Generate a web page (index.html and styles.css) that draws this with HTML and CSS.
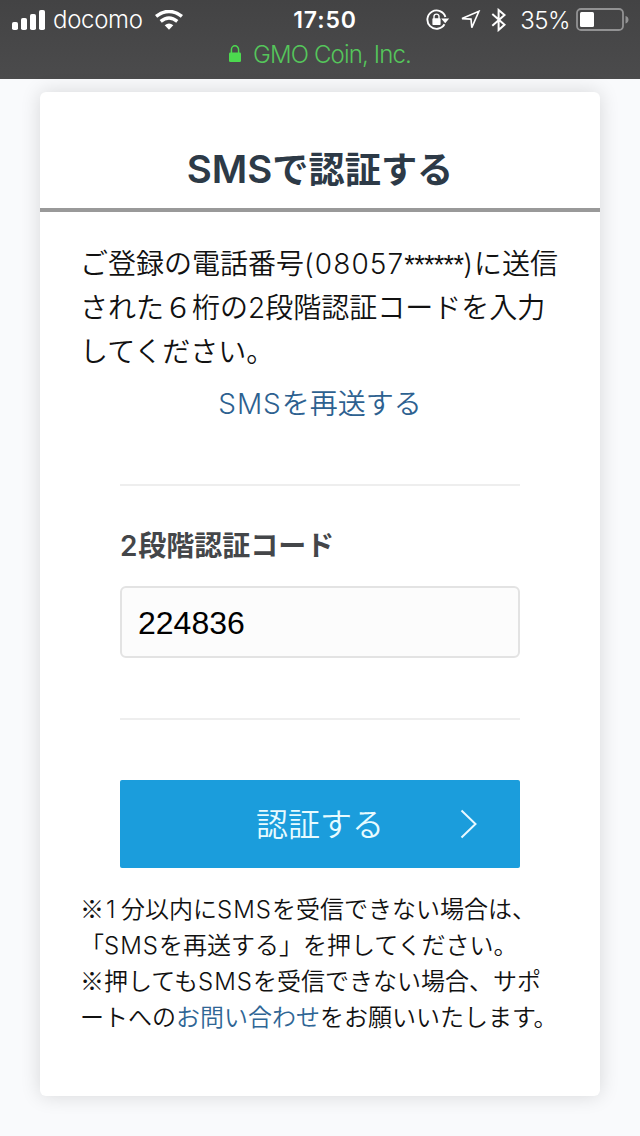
FILE: index.html
```html
<!DOCTYPE html>
<html lang="ja">
<head>
<meta charset="utf-8">
<title>SMSで認証する</title>
<link rel="stylesheet" href="styles.css">
</head>
<body>
<header class="browser-bar">
  <div class="status">
    <div class="carrier">
      <svg class="signal" width="34" height="21" viewBox="0 0 34 21" fill="#fff"><rect x="0" y="12" width="6" height="8" rx="1.8"/><rect x="9" y="8" width="6" height="12" rx="1.8"/><rect x="18" y="4" width="6" height="16" rx="1.8"/><rect x="27" y="0" width="6" height="20" rx="1.8"/></svg>
      <span class="carrier-name">docomo</span>
      <svg class="wifi" width="28" height="20" viewBox="0 0 28 20"><path d="M1.1 6.4Q14-3.4 26.9 6.4" fill="none" stroke="#fff" stroke-width="3.6"/><path d="M5.7 11.4Q14 4.6 22.3 11.4" fill="none" stroke="#fff" stroke-width="3.4"/><path d="M9.7 15.3Q14 11.6 18.3 15.3L14 19.8Z" fill="#fff"/></svg>
    </div>
    <span class="clock">17:50</span>
    <div class="indicators">
      <svg class="rotation" width="24" height="22" viewBox="0 0 24 22"><path d="M19.4 8A9.2 9.2 0 1 0 18.5 15.3" fill="none" stroke="#fff" stroke-width="1.9"/><path d="M15.2 9.5h8l-4 4.8Z" fill="#fff"/><rect x="6.4" y="9.3" width="8.2" height="6.7" rx=".8" fill="#fff"/><path d="M8 10V7.6a2.5 2.5 0 0 1 5 0V10" fill="none" stroke="#fff" stroke-width="1.4"/></svg>
      <svg class="location" width="21" height="20" viewBox="0 0 21 20"><path d="M2 8.6 18.9 1.3 11.8 17.6 11 9.1Z" fill="none" stroke="#fff" stroke-width="1.6"/></svg>
      <svg class="bluetooth" width="16" height="24" viewBox="0 0 16 24"><path d="M1.3 6.1 13.5 16.8 7.6 22V2L13.5 7 1.3 17.8" fill="none" stroke="#fff" stroke-width="2"/></svg>
      <span class="percent">35%</span>
      <svg class="battery" width="54" height="24" viewBox="0 0 54 24"><rect x="1" y="1" width="46" height="21" rx="4" fill="none" stroke="#929293" stroke-width="1.8"/><rect x="4" y="4" width="14" height="15" rx="1.5" fill="#fff"/><path d="M49.5 8q3 .8 3 3.7t-3 3.7Z" fill="#929293"/></svg>
    </div>
  </div>
  <div class="site">
    <svg class="lock" width="12" height="18" viewBox="0 0 12 18"><rect x="0" y="7.5" width="12" height="9.6" rx="1.3" fill="#4cd94f"/><path d="M2.4 8V4.8a3.6 4 0 0 1 7.2 0V8" fill="none" stroke="#4cd94f" stroke-width="1.5"/></svg>
    <span class="site-name">GMO Coin, Inc.</span>
  </div>
</header>
<main class="card">
  <h1 class="title"><span class="title-latin">SMS</span>で認証する</h1>
  <p class="lead">ご登録の電話番号<span class="phone">(08057<span class="stars">******</span>)</span>に送信<br>された６桁の2段階認証コードを入力<br>してください。</p>
  <a class="resend"><span class="sms">SMS</span>を再送する</a>
  <form class="form">
    <label class="label" for="code"><span class="label-digit">2</span>段階認証コード</label>
    <input class="code" id="code" type="text" value="224836">
  </form>
  <button class="submit" type="button">認証する<svg class="chevron" width="18" height="30" viewBox="0 0 18 30"><path d="M1.5 1.5 15.5 15 1.5 28.5" fill="none" stroke="#e8f8ff" stroke-width="2"/></svg></button>
  <p class="notes"><span class="mark">※</span><span class="note-digit">1</span>分以内に<span class="sms">SMS</span>を受信できない場合は、<br>「<span class="sms">SMS</span>を再送する」を押してください。<br><span class="mark">※</span>押しても<span class="sms">SMS</span>を受信できない場合、サポ<br>ートへの<a class="contact">お問い合わせ</a>をお願いいたします。</p>
</main>
</body>
</html>
```
FILE: styles.css
```css
* { box-sizing: border-box; }
body {
  margin: 0;
  height: 1136px;
  overflow: hidden;
  background: #f9fafc;
  color: #111;
  font-family: Inter, "Noto Sans CJK JP", sans-serif;
  font-weight: 350;
}
svg { display: block; flex: none; }
.browser-bar {
  height: 79px;
  background: linear-gradient(#434344, #4b4b4c);
  color: #fff;
}
.status {
  display: grid;
  grid-template-columns: 1fr auto 1fr;
  align-items: center;
  height: 40px;
  padding: 0 10px 0 12px;
}
.carrier, .indicators { display: flex; align-items: center; }
.carrier-name { margin-left: 7px; font-size: 24px; line-height: 40px; letter-spacing: -.3px; }
.wifi { margin-left: 12px; }
.clock { margin-left: 8px; font-size: 23px; font-weight: 600; letter-spacing: .9px; }
.indicators { justify-content: flex-end; }
.location { margin-left: 10px; }
.bluetooth { margin-left: 10px; }
.percent { margin-left: 13px; font-size: 24px; letter-spacing: -.5px; }
.battery { margin-left: 6px; }
.site {
  display: flex;
  justify-content: center;
  align-items: center;
  gap: 12px;
  height: 28px;
  color: #55c65b;
  font-size: 24px;
}
.site-name { letter-spacing: -.85px; }
.card {
  width: 560px;
  height: 1004px;
  margin: 13px auto 0;
  border-radius: 6px;
  background: #fff;
  box-shadow: 0 0 20px rgba(0, 0, 0, .14);
}
.title {
  height: 120px;
  margin: 0;
  padding-top: 52px;
  border-bottom: 4px solid #999;
  color: #2d3a47;
  font-size: 36.2px;
  font-weight: 700;
  line-height: 52px;
  text-align: center;
}
.title-latin { font-size: 38.5px; font-weight: 600; line-height: 1; }
.lead {
  margin: 0;
  padding: 30px 0 0 40px;
  font-size: 28px;
  line-height: 44px;
  white-space: nowrap;
}
.phone { display: inline-block; width: 170px; letter-spacing: 1.1px; }
.stars {
  font: 27px/1 "Liberation Sans", sans-serif;
  letter-spacing: -.7px;
}
.sms { letter-spacing: 1px; }
.resend {
  display: block;
  margin-top: 8px;
  color: #2d6190;
  font-size: 28px;
  line-height: 44px;
  text-align: center;
}
.form {
  width: 400px;
  height: 236px;
  margin: 58px auto 0;
  padding-top: 38px;
  border: solid #eee;
  border-width: 2px 0;
}
.label {
  display: block;
  color: #444649;
  font-size: 28px;
  font-weight: 700;
  line-height: 44px;
}
.label-digit { font-weight: 600; letter-spacing: .8px; }
.code {
  display: block;
  width: 400px;
  height: 72px;
  margin: 18px 0 0;
  padding: 2px 16px 0;
  border: 2px solid #e3e3e3;
  border-radius: 6px;
  background: #fcfcfc;
  color: #000;
  font: 32px "Liberation Sans", sans-serif;
}
.submit {
  display: block;
  position: relative;
  width: 400px;
  height: 88px;
  margin: 60px auto 0;
  padding: 0 0 3px;
  border: 0;
  border-radius: 2px;
  background: #1b9ddc;
  color: #e8fbff;
  font: 350 32px/85px "Noto Sans CJK JP", sans-serif;
}
.chevron { position: absolute; top: 29px; right: 42px; }
.notes {
  margin: 0;
  padding: 24px 0 0 40px;
  font-size: 24px;
  line-height: 36px;
  white-space: nowrap;
}
.mark { font-family: "Noto Sans CJK JP", sans-serif; line-height: 1; }
.note-digit { display: inline-block; width: 17px; padding-left: 2px; }
.contact { color: #2f6695; }
```
